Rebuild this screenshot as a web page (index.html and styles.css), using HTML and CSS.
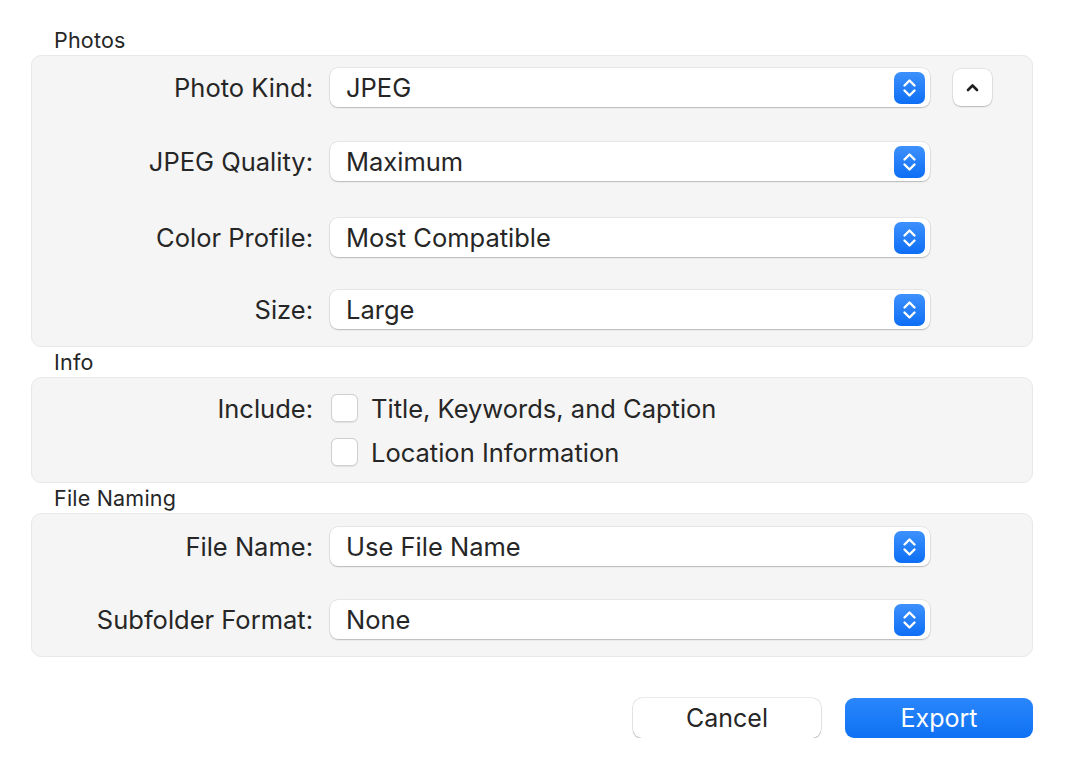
FILE: index.html
```html
<!DOCTYPE html>
<html>
<head>
<meta charset="utf-8">
<link rel="stylesheet" href="styles.css">
</head>
<body>
<div class="sheet">
  <div class="section-title">Photos</div>
  <div class="group photos">
    <div class="label">Photo Kind:</div>
    <div class="popup"><span>JPEG</span><span class="stepper"><svg viewBox="0 0 31 32" width="31" height="32"><path d="M10.5 13.5 L15.5 8.5 L20.5 13.5 M10.5 18.5 L15.5 23.5 L20.5 18.5" fill="none" stroke="#fff" stroke-width="2.4" stroke-linecap="round" stroke-linejoin="round"/></svg></span></div>
    <div class="collapse"><svg viewBox="0 0 39 37" width="39" height="37"><path d="M15 21 L19.5 16.5 L24 21" fill="none" stroke="#1f1f1f" stroke-width="2.6" stroke-linecap="round" stroke-linejoin="round"/></svg></div>

    <div class="label">JPEG Quality:</div>
    <div class="popup"><span>Maximum</span><span class="stepper"><svg viewBox="0 0 31 32" width="31" height="32"><path d="M10.5 13.5 L15.5 8.5 L20.5 13.5 M10.5 18.5 L15.5 23.5 L20.5 18.5" fill="none" stroke="#fff" stroke-width="2.4" stroke-linecap="round" stroke-linejoin="round"/></svg></span></div>

    <div class="label shift">Color Profile:</div>
    <div class="popup shift"><span>Most Compatible</span><span class="stepper"><svg viewBox="0 0 31 32" width="31" height="32"><path d="M10.5 13.5 L15.5 8.5 L20.5 13.5 M10.5 18.5 L15.5 23.5 L20.5 18.5" fill="none" stroke="#fff" stroke-width="2.4" stroke-linecap="round" stroke-linejoin="round"/></svg></span></div>

    <div class="label">Size:</div>
    <div class="popup"><span>Large</span><span class="stepper"><svg viewBox="0 0 31 32" width="31" height="32"><path d="M10.5 13.5 L15.5 8.5 L20.5 13.5 M10.5 18.5 L15.5 23.5 L20.5 18.5" fill="none" stroke="#fff" stroke-width="2.4" stroke-linecap="round" stroke-linejoin="round"/></svg></span></div>
  </div>

  <div class="section-title">Info</div>
  <div class="group info">
    <div class="label">Include:</div>
    <label class="check"><span class="box"></span><span>Title, Keywords, and Caption</span></label>
    <div class="label"></div>
    <label class="check"><span class="box"></span><span>Location Information</span></label>
  </div>

  <div class="section-title">File Naming</div>
  <div class="group naming">
    <div class="label">File Name:</div>
    <div class="popup"><span>Use File Name</span><span class="stepper"><svg viewBox="0 0 31 32" width="31" height="32"><path d="M10.5 13.5 L15.5 8.5 L20.5 13.5 M10.5 18.5 L15.5 23.5 L20.5 18.5" fill="none" stroke="#fff" stroke-width="2.4" stroke-linecap="round" stroke-linejoin="round"/></svg></span></div>

    <div class="label">Subfolder Format:</div>
    <div class="popup"><span>None</span><span class="stepper"><svg viewBox="0 0 31 32" width="31" height="32"><path d="M10.5 13.5 L15.5 8.5 L20.5 13.5 M10.5 18.5 L15.5 23.5 L20.5 18.5" fill="none" stroke="#fff" stroke-width="2.4" stroke-linecap="round" stroke-linejoin="round"/></svg></span></div>
  </div>

  <div class="buttons">
    <button class="btn cancel">Cancel</button>
    <button class="btn export">Export</button>
  </div>
</div>
</body>
</html>
```

FILE: styles.css
```css
html, body {
  margin: 0;
  padding: 0;
  background: #ffffff;
}
body {
  font-family: Inter, "Noto Sans", "Liberation Sans", sans-serif;
  color: #252525;
}
.sheet {
  width: 1002px;
  padding: 25px 0 0 31px;
  display: flex;
  flex-direction: column;
}
.section-title {
  height: 30px;
  line-height: 30px;
  font-size: 21.5px;
  letter-spacing: 0.2px;
  padding-left: 23px;
  color: #262626;
}
.group {
  box-sizing: border-box;
  background: #f5f5f5;
  border: 1px solid #e8e8e8;
  border-radius: 10px;
  display: grid;
  grid-template-columns: 281px 600px 39px;
  column-gap: 17px;
  align-items: center;
}
.photos {
  height: 292px;
  padding: 12px 0 16px;
  grid-auto-rows: 39px;
  row-gap: 35px;
  align-content: start;
}
.shift {
  margin-top: 4px;
}
.info {
  height: 106px;
  padding: 16px 0 16px;
  grid-auto-rows: 28px;
  row-gap: 16px;
  align-content: start;
}
.naming {
  height: 144px;
  padding: 13px 0 17px;
  grid-auto-rows: 39px;
  row-gap: 34px;
  align-content: start;
}
.label {
  grid-column: 1;
  text-align: right;
  font-size: 25.5px;
  color: #262626;
}
.popup {
  grid-column: 2;
  box-sizing: border-box;
  height: 39px;
  background: #ffffff;
  border-radius: 8px;
  box-shadow: 0 0 0 0.5px rgba(0,0,0,0.12), 0 1px 1.5px rgba(0,0,0,0.2);
  display: flex;
  align-items: center;
  justify-content: space-between;
  padding: 0 5px 0 16px;
  font-size: 25.5px;
  color: #262626;
}
.stepper {
  width: 31px;
  height: 32px;
  border-radius: 7px;
  background: linear-gradient(#3d91fc, #0d6ef5);
  display: flex;
}
.collapse {
  grid-column: 3;
  width: 39px;
  height: 37px;
  margin-left: 6px;
  background: #ffffff;
  border-radius: 8px;
  box-shadow: 0 0 0 0.5px rgba(0,0,0,0.12), 0 1px 1.5px rgba(0,0,0,0.2);
  display: flex;
}
.check {
  grid-column: 2;
  display: flex;
  align-items: center;
  gap: 13px;
  font-size: 25.5px;
  color: #262626;
  padding-left: 1px;
}
.box {
  box-sizing: border-box;
  width: 27px;
  height: 28px;
  border-radius: 6px;
  background: #ffffff;
  border: 1px solid #d0d0d0;
  box-shadow: 0 0.5px 1px rgba(0,0,0,0.08);
}
.buttons {
  display: flex;
  justify-content: flex-end;
  gap: 24px;
  margin-top: 41px;
}
.btn {
  width: 188px;
  height: 40px;
  border: none;
  border-radius: 9px;
  font-family: Inter, "Noto Sans", "Liberation Sans", sans-serif;
  font-size: 25px;
  padding: 0;
}
.cancel {
  background: #ffffff;
  color: #262626;
  box-shadow: 0 0 0 0.5px rgba(0,0,0,0.16), 0 1px 1.5px rgba(0,0,0,0.2);
}
.export {
  background: linear-gradient(#2a86fb, #0f71f3);
  color: #ffffff;
}
```
